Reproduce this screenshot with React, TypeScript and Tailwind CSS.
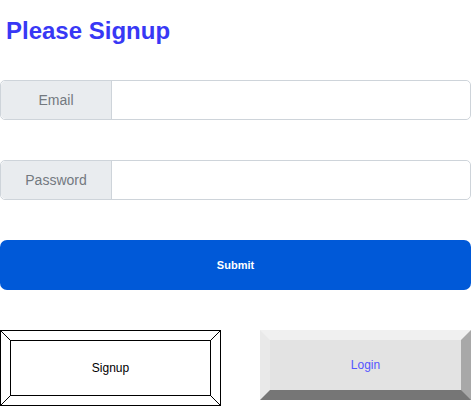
const font = "font-['Liberation_Sans',Arial,sans-serif]";

function InputGroup({ label, type }: { label: string; type: string }) {
  return (
    <div className="flex h-10 w-full rounded-[5px] border border-[#ced4da]">
      <span className="flex w-[111px] shrink-0 items-center justify-center rounded-l-[5px] border-r border-[#ced4da] bg-[#e9ecef] text-[14px] text-[#73797f]">
        {label}
      </span>
      <input type={type} className="min-w-0 flex-1 rounded-r-[5px] bg-white px-3 text-[14px] outline-none" />
    </div>
  );
}

function FrameButton() {
  return (
    <button type="button" className="relative flex h-[76px] w-[221px] items-center justify-center bg-white text-[12px] text-black">
      <svg className="absolute inset-0" width="221" height="76" viewBox="0 0 221 76" fill="none" stroke="#000" strokeWidth="1" aria-hidden>
        <rect x="0.5" y="0.5" width="220" height="75" />
        <rect x="10.5" y="10.5" width="200" height="55" />
        <path d="M0.5 0.5 10.5 10.5M220.5 0.5 210.5 10.5M0.5 75.5 10.5 65.5M220.5 75.5 210.5 65.5" />
      </svg>
      <span className="relative">Signup</span>
    </button>
  );
}

export default function App() {
  return (
    <div className={`${font} w-[471px] bg-white`}>
      <h1 className="mt-[17px] px-[6px] text-[24px] font-bold leading-[28px] text-[#3838f5]">Please Signup</h1>

      <div className="mt-[35px] flex flex-col gap-10">
        <InputGroup label="Email" type="email" />
        <InputGroup label="Password" type="password" />
      </div>

      <button
        type="button"
        className="mt-10 flex h-[50px] w-full items-center justify-center rounded-[7px] bg-[#0059d8] text-[11px] font-bold text-white"
      >
        Submit
      </button>

      <div className="mt-10 flex items-start justify-between">
        <FrameButton />
        <button
          type="button"
          className="flex h-[70px] w-[211px] items-center justify-center border-[10px] border-t-[#f0f0f0] border-l-[#e9e9e9] border-r-[#a8a8a8] border-b-[#767676] bg-[#e3e3e3] text-[12px] text-[#5555ff]"
        >
          Login
        </button>
      </div>
    </div>
  );
}
